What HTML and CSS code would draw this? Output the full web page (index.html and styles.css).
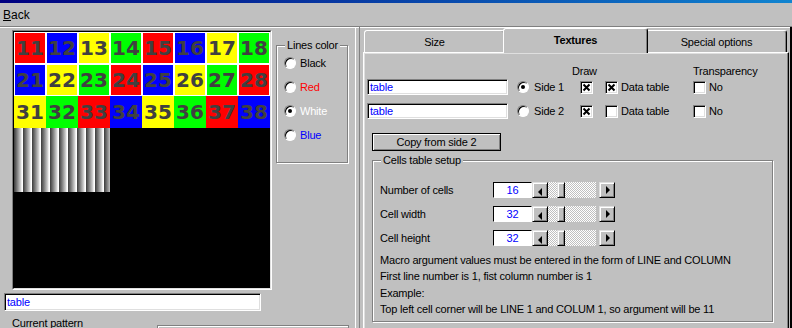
FILE: index.html
```html
<!DOCTYPE html>
<html>
<head>
    <title>Texture editor</title>
    <link rel="stylesheet" href="styles.css">
</head>
<body>
    <div class="titlebar"></div>
    <div class="menubar"><span class="menu-item"><u>B</u>ack</span></div>

    <div class="main">
        <div class="left">
            <div class="top-row">
                <div class="preview">
                    <div class="canvas">
                        <div class="cells">
                            <div class="cell lined red">11</div>
                            <div class="cell lined blue">12</div>
                            <div class="cell lined yellow">13</div>
                            <div class="cell lined green">14</div>
                            <div class="cell lined red">15</div>
                            <div class="cell lined blue">16</div>
                            <div class="cell lined yellow">17</div>
                            <div class="cell lined green">18</div>

                            <div class="cell lined blue">21</div>
                            <div class="cell lined yellow">22</div>
                            <div class="cell lined green">23</div>
                            <div class="cell lined red">24</div>
                            <div class="cell lined blue">25</div>
                            <div class="cell lined yellow">26</div>
                            <div class="cell lined green">27</div>
                            <div class="cell lined red">28</div>

                            <div class="cell yellow">31</div>
                            <div class="cell green">32</div>
                            <div class="cell red">33</div>
                            <div class="cell blue">34</div>
                            <div class="cell yellow">35</div>
                            <div class="cell green">36</div>
                            <div class="cell red">37</div>
                            <div class="cell blue">38</div>
                        </div>
                        <div class="stripes"></div>
                    </div>
                </div>

                <div class="group lines-color">
                    <span class="group-label">Lines color</span>
                    <div class="option"><span class="radio"></span><span>Black</span></div>
                    <div class="option"><span class="radio"></span><span class="txt-red">Red</span></div>
                    <div class="option"><span class="radio checked"></span><span class="txt-white">White</span></div>
                    <div class="option"><span class="radio"></span><span class="txt-blue">Blue</span></div>
                </div>
            </div>

            <div class="field pattern-name">table</div>

            <div class="bottom-row">
                <span class="current-label">Current pattern</span>
                <div class="pattern-box"></div>
            </div>
        </div>

        <div class="right">
            <div class="tabs">
                <div class="tab">Size</div>
                <div class="tab active">Textures</div>
                <div class="tab">Special options</div>
            </div>

            <div class="tab-body">
                <div class="side-row header">
                    <span class="c-name"></span>
                    <span class="c-side"></span>
                    <span class="draw-head">Draw</span>
                    <span class="trans-head">Transparency</span>
                </div>

                <div class="side-row">
                    <div class="c-name"><div class="field side-name">table</div></div>
                    <div class="c-side"><span class="radio checked"></span><span>Side 1</span></div>
                    <div class="c-draw"><span class="check on"><svg width="9" height="9" viewBox="0 0 9 9"><path d="M1.5 1.5L7.5 7.5M7.5 1.5L1.5 7.5" stroke="#000" stroke-width="2"/></svg></span></div>
                    <div class="c-data"><span class="check on"><svg width="9" height="9" viewBox="0 0 9 9"><path d="M1.5 1.5L7.5 7.5M7.5 1.5L1.5 7.5" stroke="#000" stroke-width="2"/></svg></span><span>Data table</span></div>
                    <div class="c-trans"><span class="check"></span><span>No</span></div>
                </div>

                <div class="side-row second">
                    <div class="c-name"><div class="field side-name">table</div></div>
                    <div class="c-side"><span class="radio"></span><span>Side 2</span></div>
                    <div class="c-draw"><span class="check on"><svg width="9" height="9" viewBox="0 0 9 9"><path d="M1.5 1.5L7.5 7.5M7.5 1.5L1.5 7.5" stroke="#000" stroke-width="2"/></svg></span></div>
                    <div class="c-data"><span class="check"></span><span>Data table</span></div>
                    <div class="c-trans"><span class="check"></span><span>No</span></div>
                </div>

                <button class="copy-btn">Copy from side 2</button>

                <div class="group cells-setup">
                    <span class="group-label">Cells table setup</span>

                    <div class="spin-row">
                        <span class="spin-label">Number of cells</span>
                        <div class="spin-value">16</div>
                        <div class="scroll">
                            <span class="arrow left"></span>
                            <span class="track"><span class="thumb"></span></span>
                            <span class="arrow right"></span>
                        </div>
                    </div>
                    <div class="spin-row">
                        <span class="spin-label">Cell width</span>
                        <div class="spin-value">32</div>
                        <div class="scroll">
                            <span class="arrow left"></span>
                            <span class="track"><span class="thumb"></span></span>
                            <span class="arrow right"></span>
                        </div>
                    </div>
                    <div class="spin-row">
                        <span class="spin-label">Cell height</span>
                        <div class="spin-value">32</div>
                        <div class="scroll">
                            <span class="arrow left"></span>
                            <span class="track"><span class="thumb"></span></span>
                            <span class="arrow right"></span>
                        </div>
                    </div>

                    <div class="notes">
                        <p>Macro argument values must be entered in the form of LINE and COLUMN</p>
                        <p>First line number is 1, fist column number is 1</p>
                        <p>Example:</p>
                        <p>Top left cell corner will be LINE 1 and COLUM 1, so argument will be 11</p>
                    </div>
                </div>
            </div>
        </div>
    </div>
</body>
</html>
```

FILE: styles.css
```css
body {
    margin: 0;
    width: 792px;
    height: 328px;
    overflow: hidden;
    background-color: #c0c0c0;
    font-family: "Liberation Sans", Arial, sans-serif;
    font-size: 11px;
    letter-spacing: -0.2px;
    color: #000;
}
.titlebar {
    height: 3px;
    background: linear-gradient(to right, #000080, #1084d0);
}
.menubar {
    height: 23px;
    display: flex;
    align-items: center;
    padding-left: 3px;
    border-bottom: 1px solid #808080;
    box-shadow: 0 1px #fff;
}
.menu-item {
    font-size: 12px;
    letter-spacing: 0;
}
.main {
    display: flex;
    height: 301px;
    overflow: hidden;
}

/* left side */
.left {
    width: 355px;
    border-right: 1px solid #fff;
    padding-top: 3px;
}
.top-row {
    display: flex;
    align-items: flex-start;
}
.preview {
    margin-left: 12px;
    border: 1px solid;
    border-color: #808080 #fff #fff #808080;
}
.canvas {
    width: 256px;
    height: 256px;
    background-color: #000;
    border: 1px solid;
    border-color: #000 #dfdfdf #dfdfdf #000;
}
.cells {
    display: grid;
    grid-template-columns: repeat(8, 32px);
    grid-auto-rows: 32px;
}
.cell {
    display: flex;
    justify-content: center;
    align-items: center;
    font-family: "DejaVu Sans", sans-serif;
    font-weight: bold;
    font-size: 20px;
    letter-spacing: 0;
    color: #404040;
}
.cell.lined {
    border: 1px solid #fff;
}
.red { background-color: #ff0000; }
.blue { background-color: #0000ff; }
.yellow { background-color: #ffff00; }
.green { background-color: #00ff00; }
.stripes {
    width: 96px;
    height: 64px;
    background: repeating-linear-gradient(90deg, #3a3a3a 0, #7a7a7a 3px, #d8d8d8 7px, #fff 8px, #fff 9px);
}

.group {
    position: relative;
    border: 1px solid #808080;
    box-shadow: 1px 1px #fff, inset 1px 1px #fff;
}
.group-label {
    position: absolute;
    top: -8px;
    left: 8px;
    padding: 0 2px;
    background-color: #c0c0c0;
    line-height: 14px;
}
.lines-color {
    margin-left: 4px;
    margin-top: 15px;
    width: 70px;
    height: 111px;
    padding-top: 5px;
    box-sizing: content-box;
}
.option {
    height: 24px;
    display: flex;
    align-items: center;
    padding-left: 7px;
    gap: 4px;
}
.txt-red { color: #ff0000; }
.txt-white { color: #fff; }
.txt-blue { color: #0000ff; }

.radio {
    position: relative;
    display: inline-block;
    width: 10px;
    height: 10px;
    border-radius: 50%;
    background-color: #fff;
    border: 1px solid;
    border-color: #808080 #fff #fff #808080;
    box-shadow: inset 1px 1px #000;
    flex: none;
}
.radio.checked::after {
    content: "";
    position: absolute;
    left: 3px;
    top: 3px;
    width: 4px;
    height: 4px;
    border-radius: 50%;
    background-color: #000;
}

.field {
    box-sizing: border-box;
    background-color: #fff;
    color: #0000ff;
    border: 1px solid;
    border-color: #808080 #fff #fff #808080;
    box-shadow: inset 1px 1px #000, inset -1px -1px #dfdfdf;
    padding-left: 2px;
    display: flex;
    align-items: center;
}
.pattern-name {
    margin: 3px 0 0 4px;
    width: 257px;
    height: 18px;
}
.bottom-row {
    display: flex;
    align-items: flex-start;
    margin-top: 5px;
}
.current-label {
    width: 145px;
    padding-left: 12px;
    line-height: 14px;
}
.pattern-box {
    margin-top: 9px;
    width: 190px;
    height: 20px;
    border: 1px solid #808080;
    box-shadow: inset 1px 1px #fff;
}

/* right side */
.right {
    margin-left: 3px;
    border-left: 1px solid #808080;
    padding-left: 3px;
    padding-right: 1px;
    border-right: 2px solid #000;
    width: 426px;
}
.tabs {
    display: flex;
    align-items: flex-end;
    height: 22px;
    margin-top: 3px;
    padding-left: 1px;
    position: relative;
    z-index: 1;
}
.tab {
    box-sizing: border-box;
    width: 141px;
    height: 22px;
    display: flex;
    justify-content: center;
    align-items: center;
    border: 1px solid;
    border-bottom: none;
    border-color: #fff #000 transparent #fff;
    border-radius: 3px 3px 0 0;
    box-shadow: inset -1px 0 #808080;
    background-color: #c0c0c0;
}
.tab.active {
    width: 145px;
    height: 25px;
    margin: 0 -2px -1px;
    font-weight: bold;
    position: relative;
    z-index: 2;
    padding-bottom: 2px;
}
.tab-body {
    box-sizing: border-box;
    width: 426px;
    height: 290px;
    border: 1px solid;
    border-color: #fff #000 #000 #fff;
    box-shadow: inset -1px -1px #808080, inset 1px 1px #dfdfdf;
    padding: 10px 0 0 3px;
}
.side-row {
    display: flex;
    align-items: center;
    height: 16px;
}
.side-row.second {
    margin-top: 8px;
}
.c-name {
    width: 150px;
    flex: none;
}
.side-name {
    width: 141px;
    height: 16px;
}
.c-side {
    width: 63px;
    flex: none;
    display: flex;
    align-items: center;
    gap: 5px;
}
.c-draw {
    width: 25px;
    flex: none;
    display: flex;
}
.c-data {
    width: 88px;
    flex: none;
    display: flex;
    align-items: center;
    gap: 3px;
}
.c-trans {
    display: flex;
    align-items: center;
    gap: 3px;
}
.draw-head {
    width: 121px;
    flex: none;
    margin-left: -8px;
}
.check {
    box-sizing: border-box;
    width: 13px;
    height: 13px;
    background-color: #fff;
    border: 1px solid;
    border-color: #808080 #fff #fff #808080;
    box-shadow: inset 1px 1px #000, inset -1px -1px #dfdfdf;
    display: flex;
    justify-content: center;
    align-items: center;
    flex: none;
}
.check svg {
    display: block;
}

.copy-btn {
    display: block;
    margin: 14px 0 0 5px;
    width: 129px;
    height: 18px;
    padding: 0;
    font-family: inherit;
    font-size: 11px;
    letter-spacing: -0.2px;
    color: #000;
    background-color: #c0c0c0;
    border: 1px solid #000;
    box-shadow: inset 1px 1px #fff, inset -1px -1px #808080;
}

.cells-setup {
    margin: 9px 0 0 5px;
    width: 401px;
    height: 162px;
    box-sizing: border-box;
    padding: 21px 0 0 7px;
}
.spin-row {
    display: flex;
    align-items: center;
    height: 16px;
    margin-bottom: 8px;
}
.spin-label {
    width: 113px;
    flex: none;
}
.spin-value {
    box-sizing: border-box;
    width: 39px;
    height: 16px;
    background-color: #fff;
    color: #0000ff;
    text-align: center;
    line-height: 14px;
    border: 1px solid;
    border-color: #000 #fff #fff #000;
}
.scroll {
    display: flex;
    height: 16px;
}
.arrow {
    box-sizing: border-box;
    width: 16px;
    height: 16px;
    background-color: #c0c0c0;
    border: 1px solid;
    border-color: #dfdfdf #000 #000 #dfdfdf;
    box-shadow: inset 1px 1px #fff, inset -1px -1px #808080;
    display: flex;
    justify-content: center;
    align-items: center;
}
.arrow::after {
    content: "";
    border-top: 4px solid transparent;
    border-bottom: 4px solid transparent;
}
.arrow.left::after {
    border-right: 4px solid #000;
}
.arrow.right::after {
    border-left: 4px solid #000;
}
.track {
    width: 48px;
    height: 16px;
    background: repeating-conic-gradient(#fff 0 25%, #c0c0c0 0 50%) 0 0 / 2px 2px;
    display: flex;
}
.thumb {
    box-sizing: border-box;
    margin-left: 9px;
    width: 8px;
    height: 16px;
    background-color: #c0c0c0;
    border: 1px solid;
    border-color: #dfdfdf #000 #000 #dfdfdf;
    box-shadow: inset 1px 1px #fff, inset -1px -1px #808080;
}
.notes {
    margin-top: -2px;
}
.notes p {
    margin: 0;
    line-height: 16.4px;
}
```
